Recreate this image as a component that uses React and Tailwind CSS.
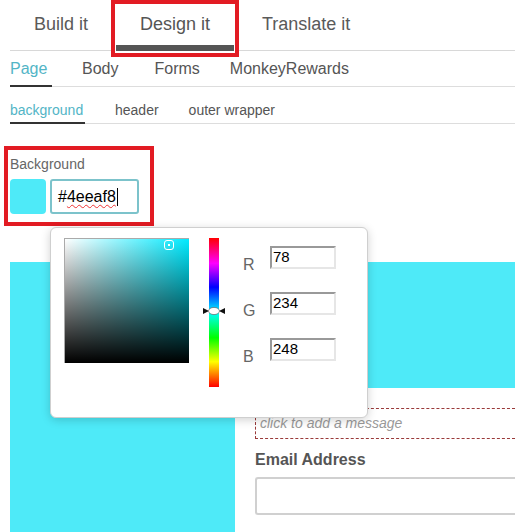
import React from "react";

const font = "font-['Liberation_Sans',Arial,sans-serif]";

function HueHandle() {
  return (
    <svg width="22" height="10" viewBox="0 0 22 10" className="absolute left-[-6px] top-[68px]">
      <polygon points="0,2 6,5 0,8" fill="#111" />
      <polygon points="22,2 16,5 22,8" fill="#111" />
      <ellipse cx="11" cy="5" rx="5.5" ry="3.6" fill="#fff" stroke="#666" strokeWidth="0.7" />
    </svg>
  );
}

function ColorPicker() {
  return (
    <div className="absolute left-[50px] top-[227px] z-20 w-[318px] h-[191px] bg-white border border-[#cfcfcf] rounded-md shadow-[0_2px_10px_rgba(0,0,0,0.18)]">
      <div className="flex pt-[10px] pl-[13px]">
        {/* saturation / value square */}
        <div className="relative w-[125px] h-[125px] border-t border-l border-[#aaa] bg-[linear-gradient(to_right,#ffffff,#00eaff)]">
          <div className="absolute inset-0 bg-[linear-gradient(to_bottom,rgba(0,0,0,0),#000)]" />
          <div className="absolute left-[99px] top-[1px] w-[10px] h-[10px] rounded-[3px] border border-white flex items-center justify-center">
            <div className="w-[2px] h-[2px] bg-white" />
          </div>
        </div>

        {/* hue bar */}
        <div className="relative ml-[20px] w-[10px] h-[149px] bg-[linear-gradient(to_bottom,#ff0000,#ff00ff_17%,#0000ff_33%,#00ffff_50%,#00ff00_67%,#ffff00_83%,#ff0000)]">
          <HueHandle />
        </div>

        {/* rgb fields */}
        <div className="ml-[24px] mt-[8px] flex flex-col gap-[23px]">
          {[
            ["R", "78"],
            ["G", "234"],
            ["B", "248"],
          ].map(([label, val]) => (
            <div key={label} className="flex items-start h-[23px]">
              <span className="w-[27px] mt-[11px] leading-none text-[16px] text-[#666]">{label}</span>
              <div className="w-[66px] h-[23px] border-2 border-t-[#999] border-l-[#999] border-r-[#e6e6e6] border-b-[#e6e6e6] text-[15px] leading-[18px] text-black pl-[1px]">
                {val}
              </div>
            </div>
          ))}
        </div>
      </div>
    </div>
  );
}

export default function App() {
  return (
    <div className={`relative w-[515px] h-[532px] overflow-hidden bg-white ${font}`}>
      <div className="pl-[10px]">
        {/* top tabs */}
        <div className="flex items-start h-[51px] border-b border-[#d8d8d8]">
          <div className="w-[101px] pl-[24px] pt-[11px] text-[18px] text-[#5a5a5a]">Build it</div>
          <div className="relative z-10 w-[128px] h-[57px] border-4 border-[#e21b23] bg-white flex flex-col items-center">
            <div className="pt-[7px] text-[18px] text-[#555]">Design it</div>
            <div className="mt-auto mb-[2px] w-[118px] h-[6px] bg-[#555]" />
          </div>
          <div className="pl-[23px] pt-[11px] text-[18px] text-[#5a5a5a]">Translate it</div>
        </div>

        {/* section tabs */}
        <div className="flex items-end h-[36px] border-b border-[#ddd] text-[16px] text-[#555]">
          <div className="w-[42px] h-full flex items-center border-b-2 border-[#333] -mb-[1px] text-[#52b5c6]">Page</div>
          <div className="ml-[30px] h-full flex items-center">Body</div>
          <div className="ml-[36px] h-full flex items-center">Forms</div>
          <div className="ml-[30px] h-full flex items-center">MonkeyRewards</div>
        </div>

        {/* sub tabs */}
        <div className="flex h-[37px] border-b border-[#ddd] text-[14px] text-[#555]">
          <div className="w-[75px] flex items-center pt-[11px] border-b-2 border-[#333] -mb-[1px] text-[#52b5c6]">background</div>
          <div className="ml-[30px] flex items-center pt-[11px]">header</div>
          <div className="ml-[30px] flex items-center pt-[11px]">outer wrapper</div>
        </div>
      </div>

      {/* background field */}
      <div className="ml-[4px] mt-[22px] w-[150px] h-[80px] border-4 border-[#e21b23] pl-[2px] pt-[6px]">
        <div className="text-[14px] text-[#666] leading-[16px]">Background</div>
        <div className="flex gap-[4px] mt-[7px]">
          <div className="w-[36px] h-[35px] rounded-[4px] bg-[#4eeaf8]" />
          <div className="w-[89px] h-[35px] rounded-[3px] border-2 border-[#7cc3cb] flex items-center pl-[6px] text-[16px] text-black">
            #<span className="underline decoration-wavy decoration-[#e33] decoration-1 underline-offset-2">4eeaf8</span>
            <span className="ml-[1px] w-[1px] h-[18px] bg-black" />
          </div>
        </div>
      </div>

      {/* preview */}
      <div className="ml-[10px] mt-[36px] h-[300px] bg-[#4eeaf8] flex">
        <div className="ml-[225px] mt-[126px] flex-1 bg-white pt-[20px] pl-[20px]">
          <div className="h-[31px] border border-dashed border-[#9a3a3a] border-r-0 flex items-center pl-[4px] text-[14px] italic text-[#999]">
            click to add a message
          </div>
          <div className="mt-[9px] text-[16px] font-bold text-[#555]">Email Address</div>
          <div className="mt-[5px] h-[38px] border-2 border-[#d0d0d0] border-r-0 rounded-l-[3px]" />
        </div>
      </div>

      <ColorPicker />
    </div>
  );
}
